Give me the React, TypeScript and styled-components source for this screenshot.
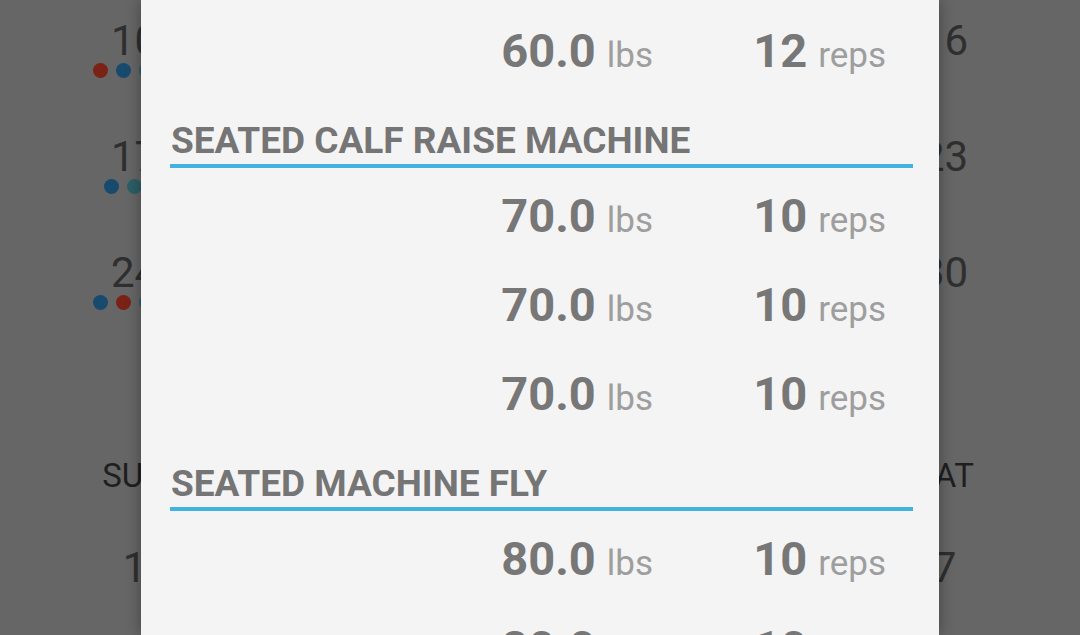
import React from 'react';
import styled, { createGlobalStyle } from 'styled-components';

const GlobalStyle = createGlobalStyle`
  html, body {
    margin: 0;
    padding: 0;
    width: 100%;
    height: 100%;
    overflow: hidden;
    background: #666666;
    font-family: Roboto, "Liberation Sans", Arial, sans-serif;
  }
  #root {
    height: 100%;
  }
`;

type Workout = 'red' | 'blue' | 'teal';

const dotColors: Record<Workout, string> = {
  red: '#7a2216',
  blue: '#184a6e',
  teal: '#2b5f66',
};

const Screen = styled.div`
  position: relative;
  width: 1080px;
  height: 635px;
  overflow: hidden;
  background: #666666;
`;

const Calendar = styled.div`
  padding: 5px 68px 0 67px;
  display: flex;
  flex-direction: column;
`;

const WeekRow = styled.div`
  display: grid;
  grid-template-columns: repeat(7, 1fr);
  height: 116px;
  padding-top: 14px;
  box-sizing: border-box;
`;

const DayCell = styled.div`
  display: flex;
  flex-direction: column;
  align-items: center;
`;

const DayNumber = styled.div`
  font-size: 42px;
  line-height: 44px;
  color: #2f2f2f;
`;

const Dots = styled.div`
  display: flex;
  gap: 8px;
  height: 15px;
`;

const Dot = styled.span<{ $kind: Workout }>`
  width: 15px;
  height: 15px;
  border-radius: 50%;
  background: ${({ $kind }) => dotColors[$kind]};
`;

const MonthTitle = styled.div`
  height: 103px;
  display: flex;
  align-items: center;
  justify-content: center;
  font-size: 40px;
  color: #2a2a2a;
`;

const WeekdayRow = styled.div`
  display: grid;
  grid-template-columns: repeat(7, 1fr);
  margin-bottom: 36px;
`;

const Weekday = styled.div`
  text-align: center;
  font-size: 33px;
  line-height: 40px;
  color: #1f1f1f;
`;

const Dialog = styled.div`
  position: absolute;
  top: 0;
  bottom: 0;
  left: 141px;
  width: 798px;
  background: #f4f4f4;
  box-shadow: 0 0 14px rgba(0, 0, 0, 0.35);
  overflow: hidden;
`;

const DialogBody = styled.div`
  padding: 6px 26px 0 29px;
`;

const ExerciseTitle = styled.h2`
  margin: 24px 0 3px;
  padding: 0 0 1px 1px;
  font-size: 37px;
  line-height: 44px;
  font-weight: 700;
  color: #757575;
  border-bottom: 4px solid #41b3de;
  text-transform: uppercase;
  white-space: nowrap;
`;

const SetRow = styled.div`
  display: flex;
  justify-content: flex-end;
  height: 89px;
  line-height: 89px;
  padding-right: 27px;
`;

const Measure = styled.div<{ $width: number }>`
  width: ${({ $width }) => $width}px;
  text-align: right;
  white-space: nowrap;
`;

const Value = styled.span`
  font-size: 47px;
  font-weight: 700;
  color: #777777;
`;

const Unit = styled.span`
  margin-left: 11px;
  font-size: 35px;
  color: #9e9e9e;
`;

type Cell = { day?: number; dots?: Workout[] };

const juneWeeks: Cell[][] = [
  [
    { day: 10, dots: ['red', 'blue', 'teal', 'blue'] },
    { day: 11 }, { day: 12 }, { day: 13 }, { day: 14 }, { day: 15 },
    { day: 16 },
  ],
  [
    { day: 17, dots: ['blue', 'teal', 'red'] },
    { day: 18 }, { day: 19 }, { day: 20 }, { day: 21 }, { day: 22 },
    { day: 23 },
  ],
  [
    { day: 24, dots: ['blue', 'red', 'teal', 'blue'] },
    { day: 25 }, { day: 26 }, { day: 27 }, { day: 28 }, { day: 29 },
    { day: 30 },
  ],
];

const julyWeeks: Cell[][] = [
  [{ day: 1 }, { day: 2 }, { day: 3 }, { day: 4 }, { day: 5 }, { day: 6 }, { day: 7 }],
];

const weekdays = ['SUN', 'MON', 'TUE', 'WED', 'THU', 'FRI', 'SAT'];

type WorkoutSet = { weight: number; reps: number };
type Exercise = { name: string; sets: WorkoutSet[] };

const previousSets: WorkoutSet[] = [{ weight: 60, reps: 12 }];

const exercises: Exercise[] = [
  {
    name: 'Seated Calf Raise Machine',
    sets: [
      { weight: 70, reps: 10 },
      { weight: 70, reps: 10 },
      { weight: 70, reps: 10 },
    ],
  },
  {
    name: 'Seated Machine Fly',
    sets: [
      { weight: 80, reps: 10 },
      { weight: 80, reps: 10 },
    ],
  },
];

const Week: React.FC<{ cells: Cell[] }> = ({ cells }) => (
  <WeekRow>
    {cells.map((c, i) => (
      <DayCell key={i}>
        <DayNumber>{c.day}</DayNumber>
        <Dots>
          {(c.dots || []).map((d, j) => (
            <Dot key={j} $kind={d} />
          ))}
        </Dots>
      </DayCell>
    ))}
  </WeekRow>
);

const SetLine: React.FC<{ set: WorkoutSet }> = ({ set }) => (
  <SetRow>
    <Measure $width={200}>
      <Value>{set.weight.toFixed(1)}</Value>
      <Unit>lbs</Unit>
    </Measure>
    <Measure $width={233}>
      <Value>{set.reps}</Value>
      <Unit>reps</Unit>
    </Measure>
  </SetRow>
);

const App: React.FC = () => {
  return (
    <>
      <GlobalStyle />
      <Screen>
        <Calendar>
          {juneWeeks.map((w, i) => (
            <Week key={i} cells={w} />
          ))}
          <MonthTitle>JULY 2018</MonthTitle>
          <WeekdayRow>
            {weekdays.map((d) => (
              <Weekday key={d}>{d}</Weekday>
            ))}
          </WeekdayRow>
          {julyWeeks.map((w, i) => (
            <Week key={i} cells={w} />
          ))}
        </Calendar>

        <Dialog>
          <DialogBody>
            {previousSets.map((s, i) => (
              <SetLine key={i} set={s} />
            ))}
            {exercises.map((ex) => (
              <React.Fragment key={ex.name}>
                <ExerciseTitle>{ex.name}</ExerciseTitle>
                {ex.sets.map((s, i) => (
                  <SetLine key={i} set={s} />
                ))}
              </React.Fragment>
            ))}
          </DialogBody>
        </Dialog>
      </Screen>
    </>
  );
};

export default App;
